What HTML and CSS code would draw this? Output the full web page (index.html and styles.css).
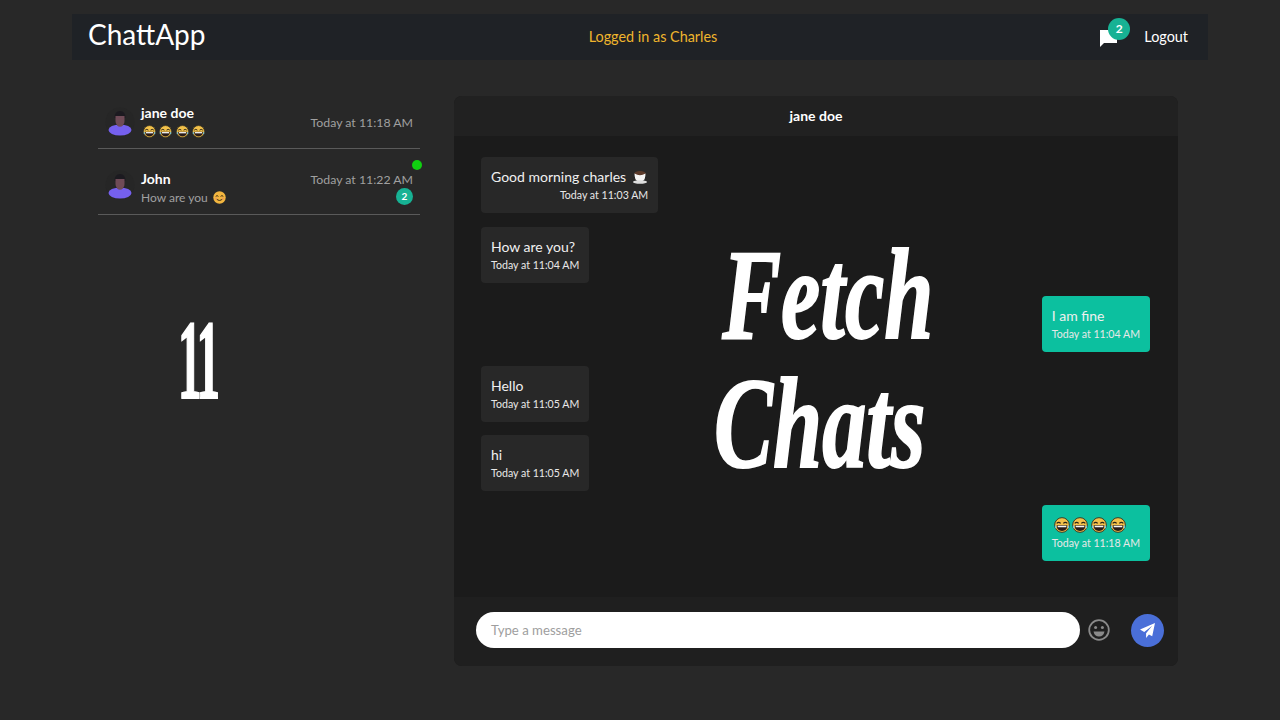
FILE: index.html
```html
<!DOCTYPE html>
<html lang="en">

<head>
  <meta charset="UTF-8" />
  <meta name="viewport" content="width=device-width, initial-scale=1.0" />
  <title>ChattApp</title>
  <link rel="stylesheet" href="styles.css">
</head>

<body>
  <svg class="defs" width="0" height="0">
    <symbol id="laugh" viewBox="0 0 24 24">
      <circle cx="12" cy="12" r="11" fill="#f2c14a" stroke="#3a3320" stroke-width="1.4" />
      <path d="M4 9.500q3-3 6 0M14 9.500q3-3 6 0" fill="none" stroke="#2a2418" stroke-width="1.800" />
      <path d="M4 12.500h16q0 8.500-8 8.500t-8-8.500z" fill="#2a1c18" />
      <path d="M5.500 13h13v2.400h-13z" fill="#f4f4f4" />
      <path d="M1.500 12q2 1 2 3.500t-2 1zM22.500 12q-2 1-2 3.500t2 1z" fill="#6cc3e8" />
    </symbol>
    <symbol id="smile" viewBox="0 0 24 24">
      <circle cx="12" cy="12" r="11.500" fill="#f3b63f" />
      <path d="M5 10q2.500-3 5 0M14 10q2.500-3 5 0" fill="none" stroke="#3a2a14" stroke-width="1.800" />
      <path d="M6 14q6 7 12 0" fill="none" stroke="#3a2a14" stroke-width="1.800" />
      <circle cx="5.500" cy="14" r="2" fill="#ee9a5a" />
      <circle cx="18.500" cy="14" r="2" fill="#ee9a5a" />
    </symbol>
    <symbol id="avatar" viewBox="0 0 30 30">
      <circle cx="15" cy="15" r="14.500" fill="#262626" />
      <path d="M9.500 11q0-7 5.500-7t5.500 7z" fill="#1c1a20" />
      <path d="M10.500 9h9v5q0 4.500-4.500 4.500t-4.500-4.500z" fill="#6f4b57" />
      <ellipse cx="15" cy="23" rx="11.500" ry="5.500" fill="#7560ee" />
      <path d="M12 16h6v2.500q-3 2.500-6 0z" fill="#6f4b57" />
    </symbol>
  </svg>

  <div class="page">
    <nav class="navbar">
      <div class="brand">ChattApp</div>
      <div class="logged-in">Logged in as Charles</div>
      <div class="nav-right">
        <div class="nav-chat">
          <svg class="nav-chat-icon" width="18" height="18" viewBox="0 0 18 18">
            <path d="M1 1h17v13H5l-4 4z" fill="#fff" />
          </svg>
          <span class="nav-badge">2</span>
        </div>
        <span class="logout">Logout</span>
      </div>
    </nav>

    <div class="main">
      <aside class="sidebar">
        <div class="contact">
          <svg class="avatar"><use href="#avatar" /></svg>
          <div class="contact-info">
            <div class="contact-name">jane doe</div>
            <div class="contact-last">
              <svg class="emoji"><use href="#laugh" /></svg>
              <svg class="emoji"><use href="#laugh" /></svg>
              <svg class="emoji"><use href="#laugh" /></svg>
              <svg class="emoji"><use href="#laugh" /></svg>
            </div>
          </div>
          <div class="contact-meta">
            <span class="contact-time">Today at 11:18 AM</span>
          </div>
        </div>
        <div class="contact contact-second">
          <span class="online-dot"></span>
          <svg class="avatar"><use href="#avatar" /></svg>
          <div class="contact-info">
            <div class="contact-name">John</div>
            <div class="contact-last">How are you <svg class="emoji smile-after"><use href="#smile" /></svg></div>
          </div>
          <div class="contact-meta">
            <span class="contact-time">Today at 11:22 AM</span>
            <span class="unread">2</span>
          </div>
        </div>
      </aside>

      <section class="chat">
        <header class="chat-head">jane doe</header>
        <div class="messages">
          <div class="msg">
            <div class="msg-text">Good morning charles
              <svg class="emoji cup" viewBox="0 0 16 16">
                <ellipse cx="8" cy="4.500" rx="5.500" ry="2.500" fill="#5b3a2a" />
                <path d="M2.500 4.500q5.500 3.500 11 0q0 6.500-3 7.500h-5q-3-1-3-7.500z" fill="#f3f3f3" />
                <ellipse cx="8" cy="13" rx="7" ry="1.800" fill="#dcdcdc" />
              </svg>
            </div>
            <div class="msg-time">Today at 11:03 AM</div>
          </div>
          <div class="msg">
            <div class="msg-text">How are you?</div>
            <div class="msg-time">Today at 11:04 AM</div>
          </div>
          <div class="msg msg-mine">
            <div class="msg-text">I am fine</div>
            <div class="msg-time">Today at 11:04 AM</div>
          </div>
          <div class="msg">
            <div class="msg-text">Hello</div>
            <div class="msg-time">Today at 11:05 AM</div>
          </div>
          <div class="msg">
            <div class="msg-text">hi</div>
            <div class="msg-time">Today at 11:05 AM</div>
          </div>
          <div class="msg msg-mine">
            <div class="msg-text msg-emoji">
              <svg class="emoji-big"><use href="#laugh" /></svg>
              <svg class="emoji-big"><use href="#laugh" /></svg>
              <svg class="emoji-big"><use href="#laugh" /></svg>
              <svg class="emoji-big"><use href="#laugh" /></svg>
            </div>
            <div class="msg-time">Today at 11:18 AM</div>
          </div>
        </div>
        <footer class="chat-input">
          <div class="input-box">Type a message</div>
          <svg class="emoji-btn" width="22" height="22" viewBox="0 0 22 22" fill="none" stroke="#8a8a8a" stroke-width="1.800">
            <circle cx="11" cy="11" r="9.800" />
            <circle cx="7.600" cy="8.600" r="1.500" fill="#8a8a8a" stroke="none" />
            <circle cx="14.400" cy="8.600" r="1.500" fill="#8a8a8a" stroke="none" />
            <path d="M5.500 12.500h11q-1 5-5.500 5t-5.500-5z" fill="#8a8a8a" stroke="none" />
          </svg>
          <div class="send-btn">
            <svg width="15" height="15" viewBox="0 0 16 16">
              <path d="M16 0L0 7l4.500 2.500L13 3 6.500 11v5l3-3.800 3.500 2z" fill="#fff" />
            </svg>
          </div>
        </footer>
      </section>
    </div>
  </div>

  <!-- big title text over the screen -->
  <div class="over-number">11</div>
  <div class="over-title">
    <div class="over-fetch">Fetch</div>
    <div>Chats</div>
  </div>
</body>

</html>
```

FILE: styles.css
```css
* {
  box-sizing: border-box;
}

body {
  margin: 0;
  height: 720px;
  overflow: hidden;
  position: relative;
  background-color: #282828;
  color: #fff;
  font-family: 'Lato', 'Noto Sans', sans-serif;
  font-size: 14px;
}

.defs {
  position: absolute;
}

.page {
  width: 1136px;
  margin: 14px auto 0;
}

.navbar {
  display: grid;
  grid-template-columns: 1fr auto 1fr;
  align-items: center;
  height: 46px;
  padding: 0 20px 0 16px;
  background-color: #1f2226;
}

.brand {
  font-size: 28px;
  font-weight: 400;
  line-height: 38px;
  margin-top: -7px;
}

.logged-in {
  color: #efb52d;
  font-size: 14.400px;
  margin-left: 30px;
  margin-top: -2px;
}

.nav-right {
  display: flex;
  justify-content: flex-end;
  align-items: center;
  gap: 15px;
}

.nav-chat {
  position: relative;
  width: 30px;
  height: 20px;
}

.nav-chat-icon {
  position: absolute;
  left: 0;
  top: 2px;
}

.nav-badge {
  position: absolute;
  left: 9px;
  top: -9px;
  width: 22px;
  height: 22px;
  border-radius: 50%;
  background-color: #17b294;
  font-size: 12px;
  font-weight: 700;
  text-align: center;
  line-height: 22px;
}

.logout {
  font-size: 14.400px;
  margin-top: -2px;
}

.main {
  display: flex;
  gap: 34px;
  margin-top: 36px;
  padding-left: 26px;
}

.sidebar {
  width: 322px;
}

.contact {
  position: relative;
  display: flex;
  align-items: center;
  height: 53px;
  padding: 0 7px;
  border-bottom: 1px solid #5a5a5a;
}

.contact-second {
  height: 66px;
  padding-top: 6px;
}

.avatar {
  width: 30px;
  height: 30px;
  flex-shrink: 0;
  margin-right: 6px;
}

.contact-info {
  flex: 1;
}

.contact-second .contact-info {
  margin-top: 7px;
}

.contact-name {
  font-size: 14px;
  font-weight: 700;
  line-height: 19px;
}

.contact-last {
  display: flex;
  align-items: center;
  gap: 3.300px;
  color: #a0a0a0;
  font-size: 12px;
  line-height: 19px;
  height: 19px;
  padding-left: 2px;
}

.contact-second .contact-last {
  padding-left: 0;
}

.emoji {
  width: 13px;
  height: 13px;
}

.smile-after {
  margin-left: 2px;
}

.contact-meta {
  display: flex;
  flex-direction: column;
  align-items: flex-end;
  color: #a0a0a0;
  font-size: 12.300px;
}

.contact-second .contact-meta {
  margin-top: 7px;
  height: 37px;
}

.contact-time {
  line-height: 19px;
}

.unread {
  width: 17px;
  height: 17px;
  margin-top: -1px;
  border-radius: 50%;
  background-color: #17b294;
  color: #fff;
  font-size: 10px;
  font-weight: 700;
  text-align: center;
  line-height: 17px;
}

.online-dot {
  position: absolute;
  right: -2px;
  top: 11px;
  width: 10px;
  height: 10px;
  border-radius: 50%;
  background-color: #10d010;
}

.chat {
  display: flex;
  flex-direction: column;
  width: 724px;
  height: 570px;
  border-radius: 8px;
  overflow: hidden;
  background-color: #1b1b1b;
}

.chat-head {
  height: 40px;
  flex-shrink: 0;
  background-color: #212121;
  font-size: 14px;
  font-weight: 700;
  text-align: center;
  line-height: 40px;
}

.messages {
  flex: 1;
  display: flex;
  flex-direction: column;
  align-items: flex-start;
  gap: 13.600px;
  padding: 21px 28px 0 27px;
}

.msg {
  padding: 10px 10px 0;
  min-width: 108px;
  height: 56px;
  border-radius: 4px;
  background-color: #282828;
  display: flex;
  flex-direction: column;
}

.msg-mine {
  align-self: flex-end;
  background-color: #0cc09f;
}

.msg-text {
  display: flex;
  align-items: center;
  gap: 6px;
  font-size: 14px;
  line-height: 20px;
  height: 20px;
  color: #f0f0f0;
}

.cup {
  width: 16px;
  height: 16px;
}

.msg-emoji {
  gap: 2.700px;
  padding-left: 2px;
}

.emoji-big {
  width: 16px;
  height: 16px;
}

.msg-time {
  align-self: flex-end;
  font-size: 10.600px;
  line-height: 16px;
  color: #e8e8e8;
}

.chat-input {
  height: 69px;
  flex-shrink: 0;
  display: flex;
  align-items: center;
  padding: 0 14px 3px 22px;
  background-color: #1f1f1f;
}

.input-box {
  width: 604px;
  height: 36px;
  padding-left: 15px;
  border-radius: 18px;
  background-color: #fff;
  color: #9e9e9e;
  font-size: 13.200px;
  line-height: 36px;
}

.emoji-btn {
  margin-left: 8px;
}

.send-btn {
  display: flex;
  justify-content: center;
  align-items: center;
  width: 33px;
  height: 33px;
  margin-left: auto;
  border-radius: 50%;
  background-color: #4a6fd8;
}

.over-number,
.over-title {
  position: absolute;
  color: #fff;
  font-family: 'Liberation Serif', serif;
  font-weight: 700;
  -webkit-text-stroke: 2px #fff;
  transform-origin: left top;
}

.over-number {
  left: 178px;
  top: 300px;
  font-size: 112px;
  line-height: 120px;
  letter-spacing: -6px;
  transform: scaleX(0.42);
}

.over-title {
  left: 714px;
  top: 230px;
  font-size: 130px;
  font-style: italic;
  line-height: 129px;
  transform: scaleX(0.68);
}

.over-fetch {
  margin-left: 12px;
}
```
